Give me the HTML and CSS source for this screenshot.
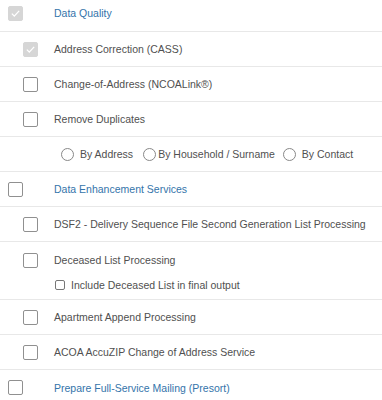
FILE: index.html
```html
<!DOCTYPE html>
<html>
<head>
<meta charset="utf-8">
<link rel="stylesheet" href="styles.css">
</head>
<body>
<div class="list">
  <div class="row first">
    <span class="cb cb-top checked"><svg viewBox="0 0 16 16"><path d="M3.5 8.2l3 3 6-6.5" /></svg></span>
    <span class="label link">Data Quality</span>
  </div>
  <div class="row">
    <span class="cb cb-sub checked"><svg viewBox="0 0 16 16"><path d="M3.5 8.2l3 3 6-6.5" /></svg></span>
    <span class="label">Address Correction (CASS)</span>
  </div>
  <div class="row">
    <span class="cb cb-sub"></span>
    <span class="label">Change-of-Address (NCOALink®)</span>
  </div>
  <div class="row">
    <span class="cb cb-sub"></span>
    <span class="label">Remove Duplicates</span>
  </div>
  <div class="row radios">
    <span class="radio-item first-radio"><span class="radio"></span>By Address</span>
    <span class="radio-item tight"><span class="radio"></span>By Household / Surname</span>
    <span class="radio-item"><span class="radio"></span>By Contact</span>
  </div>
  <div class="row">
    <span class="cb cb-top"></span>
    <span class="label link">Data Enhancement Services</span>
  </div>
  <div class="row">
    <span class="cb cb-sub"></span>
    <span class="label">DSF2 - Delivery Sequence File Second Generation List Processing</span>
  </div>
  <div class="row tall">
    <div class="line">
      <span class="cb cb-sub"></span>
      <span class="label">Deceased List Processing</span>
    </div>
    <div class="subline">
      <span class="mini"></span>
      <span class="label">Include Deceased List in final output</span>
    </div>
  </div>
  <div class="row">
    <span class="cb cb-sub"></span>
    <span class="label">Apartment Append Processing</span>
  </div>
  <div class="row">
    <span class="cb cb-sub"></span>
    <span class="label">ACOA AccuZIP Change of Address Service</span>
  </div>
  <div class="row last">
    <span class="cb cb-top"></span>
    <span class="label link">Prepare Full-Service Mailing (Presort)</span>
  </div>
</div>
</body>
</html>
```
FILE: styles.css
```css
html, body {
  margin: 0;
  padding: 0;
  background: #ffffff;
}
body {
  font-family: "Liberation Sans", Arial, sans-serif;
  font-size: 10.5px;
  color: #505050;
  overflow: hidden;
}
.list {
  width: 382px;
}
.row {
  height: 35px;
  border-bottom: 1px solid #e8e8e8;
  display: flex;
  align-items: center;
  box-sizing: border-box;
}
.row.first {
  height: 32px;
  align-items: flex-start;
}
.row.first .cb { margin-top: 6px; }
.row.first .label { margin-top: 7px; }
.row.tall {
  height: 58px;
  flex-direction: column;
  align-items: stretch;
  justify-content: flex-start;
}
.row.last { border-bottom: none; }
.line {
  display: flex;
  align-items: center;
  height: 36px;
}
.subline {
  display: flex;
  align-items: center;
  height: 14px;
  padding-left: 55px;
}
.cb {
  width: 15px;
  height: 15px;
  box-sizing: border-box;
  border: 1px solid #909090;
  border-radius: 2px;
  background: #fff;
  flex: none;
  display: flex;
  align-items: center;
  justify-content: center;
}
.cb svg {
  width: 15px;
  height: 15px;
  fill: none;
  stroke: #ffffff;
  stroke-width: 1.6;
}
.cb.checked {
  background: #d6d6d6;
  border-color: #d6d6d6;
}
.cb-top {
  margin-left: 8px;
  margin-right: 31px;
}
.cb-sub {
  margin-left: 23px;
  margin-right: 16px;
}
.label {
  white-space: nowrap;
}
.link {
  color: #3474aa;
}
.mini {
  width: 10px;
  height: 10px;
  box-sizing: border-box;
  border: 1px solid #777;
  border-radius: 2px;
  margin-right: 6px;
  flex: none;
}
.radios {
  padding-left: 61px;
}
.radio-item {
  display: flex;
  align-items: center;
}
.radio-item.first-radio {
  margin-right: 10px;
}
.radio-item.tight {
  margin-right: 8px;
}
.radio {
  width: 13px;
  height: 13px;
  box-sizing: border-box;
  border: 1px solid #888;
  border-radius: 50%;
  margin-right: 6px;
  flex: none;
}
.radio-item.tight .radio {
  margin-right: 2px;
}
```
